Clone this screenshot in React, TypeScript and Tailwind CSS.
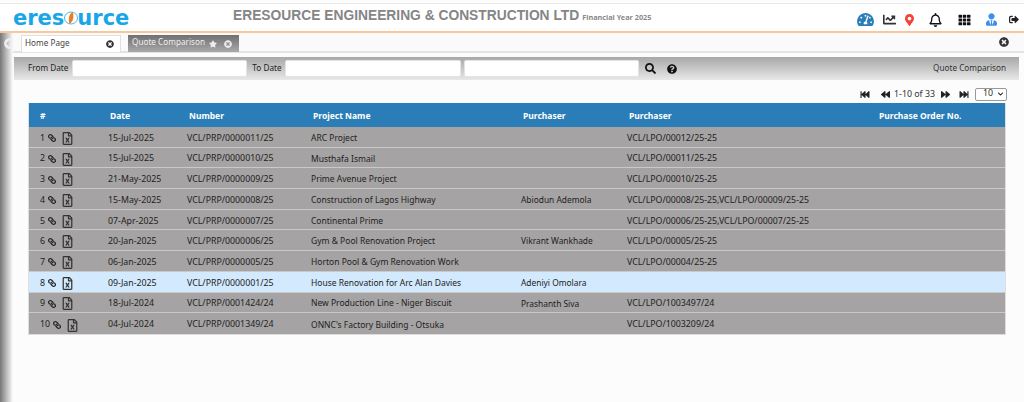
import {
  FaBackward,
  FaChartLine,
  FaFastBackward,
  FaFastForward,
  FaForward,
  FaLink,
  FaMapMarkerAlt,
  FaQuestionCircle,
  FaRegBell,
  FaRegFileExcel,
  FaSearch,
  FaSignOutAlt,
  FaStar,
  FaTachometerAlt,
  FaTh,
  FaTimesCircle,
  FaUserTie,
  FaArrowCircleLeft,
  FaChevronDown,
} from "react-icons/fa";

const rows = [
  ["1", "15-Jul-2025", "VCL/PRP/0000011/25", "ARC Project", "", "VCL/LPO/00012/25-25"],
  ["2", "15-Jul-2025", "VCL/PRP/0000010/25", "Musthafa Ismail", "", "VCL/LPO/00011/25-25"],
  ["3", "21-May-2025", "VCL/PRP/0000009/25", "Prime Avenue Project", "", "VCL/LPO/00010/25-25"],
  ["4", "15-May-2025", "VCL/PRP/0000008/25", "Construction of Lagos Highway", "Abiodun Ademola", "VCL/LPO/00008/25-25,VCL/LPO/00009/25-25"],
  ["5", "07-Apr-2025", "VCL/PRP/0000007/25", "Continental Prime", "", "VCL/LPO/00006/25-25,VCL/LPO/00007/25-25"],
  ["6", "20-Jan-2025", "VCL/PRP/0000006/25", "Gym & Pool Renovation Project", "Vikrant Wankhade", "VCL/LPO/00005/25-25"],
  ["7", "06-Jan-2025", "VCL/PRP/0000005/25", "Horton Pool & Gym Renovation Work", "", "VCL/LPO/00004/25-25"],
  ["8", "09-Jan-2025", "VCL/PRP/0000001/25", "House Renovation for Arc Alan Davies", "Adeniyi Omolara", ""],
  ["9", "18-Jul-2024", "VCL/PRP/0001424/24", "New Production Line - Niger Biscuit", "Prashanth Siva", "VCL/LPO/1003497/24"],
  ["10", "04-Jul-2024", "VCL/PRP/0001349/24", "ONNC's Factory Building - Otsuka", "", "VCL/LPO/1003209/24"],
];

function DateInput({ width }: { width: string }) {
  return <input className={`${width} h-[17px] bg-white rounded-[2px] border border-[#e4e4e4]`} />;
}

export default function App() {
  return (
    <div className="w-[1024px] h-[402px] overflow-hidden bg-[#fcfcfc] text-[8.8px] text-[#222] font-['Noto_Sans',sans-serif] flex flex-col">
      {/* top bar */}
      <header className="relative h-[30px] mt-[3px] shrink-0 bg-white border-t border-t-[#e8e8e8] border-b-2 border-b-[#f7c79d] flex items-center pl-[13px] pr-[5px]">
        <div className="w-[116px] flex items-center font-['DejaVu_Sans',sans-serif] font-bold text-[21px] leading-none text-[#18a6e8] pt-[1px]">
          <span>eres</span>
          <svg width="14" height="14" viewBox="0 0 14 14" className="mx-[-0.5px] shrink-0">
            <ellipse cx="7" cy="7" rx="6.5" ry="6" fill="none" stroke="#18a6e8" strokeWidth="0.8" />
            <path d="M8.5 1C5 3 4 8 5.5 13 9 11 10.5 5 8.5 1Z" fill="#ee7b1f" />
          </svg>
          <span>urce</span>
        </div>
        <div className="ml-[104px] flex items-baseline -mt-[3px]">
          <span className="font-['Liberation_Sans',sans-serif] font-bold text-[13.8px] text-[#858585] whitespace-nowrap">
            ERESOURCE ENGINEERING &amp; CONSTRUCTION LTD
          </span>
          <span className="ml-[3px] font-bold text-[7.3px] text-[#8a8a8a] whitespace-nowrap">
            Financial Year 2025
          </span>
        </div>
        <div className="ml-auto flex items-center h-[20px] mt-[4px] relative w-[162px]">
          <FaTachometerAlt className="absolute left-[0px] w-[17px] h-[15px] text-[#2a7fb8]" />
          <FaChartLine className="absolute left-[25px] w-[15px] h-[13px] text-[#333]" />
          <FaMapMarkerAlt className="absolute left-[48px] w-[9px] h-[12px] text-[#f44336]" />
          <FaRegBell className="absolute left-[72px] w-[13px] h-[14px] text-[#111]" />
          <FaTh className="absolute left-[101px] w-[13px] h-[12px] text-[#111]" />
          <FaUserTie className="absolute left-[129px] w-[11px] h-[13px] text-[#3d8fe8]" />
          <FaSignOutAlt className="absolute left-[152px] w-[10px] h-[11px] text-[#222]" />
        </div>
      </header>

      <div className="flex-1 flex min-h-0">
        {/* collapse strip */}
        <div className="relative w-[13px] shrink-0 bg-gradient-to-r from-[#777] via-[#bbb] to-[#fcfcfc]">
          <FaArrowCircleLeft className="absolute left-[4px] top-[5px] w-[11px] h-[11px] text-[#efefef]" />
        </div>

        <div className="flex-1 min-w-0 flex flex-col">
          {/* tabs */}
          <div className="relative h-[20px] shrink-0 bg-[#fafafa] border-b-2 border-b-[#e3e3e3] flex items-end pl-[8px] gap-[7px] text-[8.2px]">
            <div className="w-[100px] h-[17px] -mb-px bg-white border border-[#e0e0e0] border-b-0 flex items-center justify-between pl-[3px] pr-[6px] text-[#444]">
              <span className="-mt-[2px]">Home Page</span>
              <FaTimesCircle className="w-[8px] h-[8px] text-[#333]" />
            </div>
            <div className="w-[111px] h-[17px] -mb-px bg-gradient-to-b from-[#707070] to-[#a9a9a9] flex items-center pl-[4px] text-[#f0f0f0]">
              <span className="-mt-[2px]">Quote Comparison</span>
              <FaStar className="ml-[4px] w-[8px] h-[8px] text-[#eee]" />
              <FaTimesCircle className="ml-[7px] w-[8px] h-[8px] text-[#eee]" />
            </div>
            <FaTimesCircle className="absolute right-[15px] top-[4px] w-[10px] h-[10px] text-[#333]" />
          </div>

          {/* filter bar */}
          <div className="mt-[4px] ml-px mr-[5px] h-[23px] shrink-0 bg-gradient-to-b from-[#a8a8a8] to-[#e8e8e8] flex items-center pl-[14px] pr-[13px] text-[8.2px]">
            <span className="mr-[4px]">From Date</span>
            <DateInput width="w-[175px]" />
            <span className="ml-[5px] mr-[3px]">To Date</span>
            <DateInput width="w-[176px]" />
            <span className="w-[3px]" />
            <DateInput width="w-[175px]" />
            <FaSearch className="ml-[6px] w-[11px] h-[11px] text-[#111]" />
            <FaQuestionCircle className="ml-[11px] w-[10px] h-[10px] text-[#111]" />
            <span className="ml-auto text-[#333]">Quote Comparison</span>
          </div>

          {/* pager */}
          <div className="h-[23px] pt-[5px] shrink-0 flex items-center justify-end pr-[17px] text-[#333]">
            <FaFastBackward className="w-[10px] h-[9px] text-[#222]" />
            <FaBackward className="ml-[11px] w-[9px] h-[9px] text-[#222]" />
            <span className="ml-[4px] mt-[2px]">1-10 of 33</span>
            <FaForward className="ml-[6px] w-[9px] h-[9px] text-[#222]" />
            <FaFastForward className="ml-[9px] w-[10px] h-[9px] text-[#222]" />
            <div className="ml-[6px] w-[32px] h-[13px] bg-white border border-[#999] rounded-[2px] flex items-center justify-between pl-[7px] pr-[2px]">
              <span>10</span>
              <FaChevronDown className="w-[7px] h-[6px] text-[#222]" />
            </div>
          </div>

          {/* table */}
          <div className="ml-[15px] w-[978px] border border-[#dedede] border-t-0">
            <div className="grid grid-cols-[81px_78px_124px_210px_106px_251px_128px] h-[24px] pt-[2px] items-center bg-[#2a7db6] text-white font-bold text-[8.5px]">
              <span className="pl-[11px]">#</span>
              <span>Date</span>
              <span className="pl-[1px]">Number</span>
              <span className="pl-[1px]">Project Name</span>
              <span className="pl-[1px]">Purchaser</span>
              <span className="pl-[1px]">Purchaser</span>
              <span>Purchase Order No.</span>
            </div>
            {rows.map((row) => (
              <div
                key={row[0]}
                className={`grid grid-cols-[79px_79px_124px_210px_106px_251px_129px] h-[20.7px] pt-[3px] items-center border-b border-b-[#c9c9c9] last:border-b-0 ${
                  row[0] === "8" ? "bg-[#d3e9fd]" : "bg-[#a5a3a3]"
                }`}
              >
                <span className="pl-[11px] flex items-center">
                  <span>{row[0]}</span>
                  <FaLink className="ml-[3px] w-[8px] h-[8px] text-[#222] -scale-x-100" />
                  <FaRegFileExcel className="ml-[6px] w-[11px] h-[13px] text-[#333]" />
                </span>
                <span>{row[1]}</span>
                <span>{row[2]}</span>
                <span className="text-[8.5px]">{row[3]}</span>
                <span className="text-[8.4px]">{row[4]}</span>
                <span className="col-span-2 whitespace-nowrap">{row[5]}</span>
              </div>
            ))}
          </div>
        </div>
      </div>
    </div>
  );
}
